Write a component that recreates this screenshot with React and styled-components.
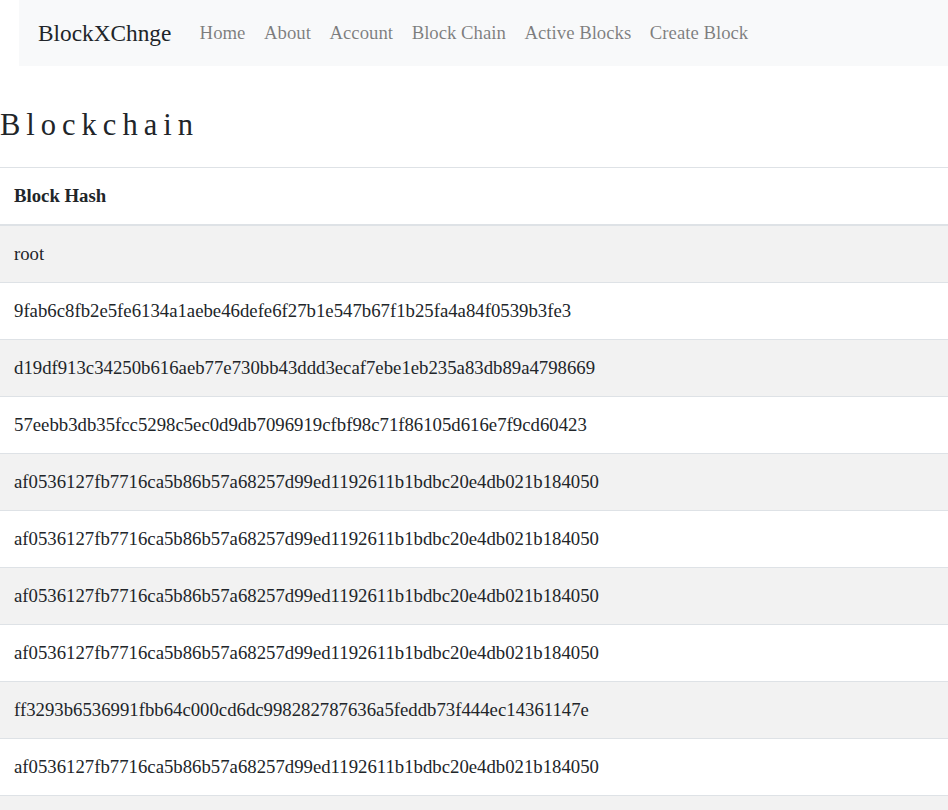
import styled, { createGlobalStyle } from "styled-components";

const GlobalStyle = createGlobalStyle`
  body {
    margin: 0;
    background: #fff;
    font-family: "Liberation Serif", "Times New Roman", serif;
    font-size: 18.75px;
    color: #212529;
  }
`;

const NAV_LINKS = ["Home", "About", "Account", "Block Chain", "Active Blocks", "Create Block"];

const HASHES = [
  "root",
  "9fab6c8fb2e5fe6134a1aebe46defe6f27b1e547b67f1b25fa4a84f0539b3fe3",
  "d19df913c34250b616aeb77e730bb43ddd3ecaf7ebe1eb235a83db89a4798669",
  "57eebb3db35fcc5298c5ec0d9db7096919cfbf98c71f86105d616e7f9cd60423",
  "af0536127fb7716ca5b86b57a68257d99ed1192611b1bdbc20e4db021b184050",
  "af0536127fb7716ca5b86b57a68257d99ed1192611b1bdbc20e4db021b184050",
  "af0536127fb7716ca5b86b57a68257d99ed1192611b1bdbc20e4db021b184050",
  "af0536127fb7716ca5b86b57a68257d99ed1192611b1bdbc20e4db021b184050",
  "ff3293b6536991fbb64c000cd6dc998282787636a5feddb73f444ec14361147e",
  "af0536127fb7716ca5b86b57a68257d99ed1192611b1bdbc20e4db021b184050",
  "af0536127fb7716ca5b86b57a68257d99ed1192611b1bdbc20e4db021b184050",
];

const Navbar = styled.nav`
  margin-left: 19px;
  height: 66px;
  background: #f8f9fa;
  display: flex;
  align-items: center;
  padding: 0 19px;
`;

const Brand = styled.a`
  font-size: 23.3px;
  color: #212529;
  margin-right: 19px;
  text-decoration: none;
`;

const NavList = styled.div`
  display: flex;
  align-items: center;
`;

const NavLink = styled.a`
  padding: 8px 9.3px;
  color: rgba(0, 0, 0, 0.5);
  text-decoration: none;
`;

const Title = styled.h1`
  margin: 44px 0 27px;
  font-weight: 400;
  font-size: 30.5px;
  line-height: 30px;
  letter-spacing: 6px;
  color: #212529;
`;

const Table = styled.table`
  width: 100%;
  border-collapse: collapse;
`;

const HeadCell = styled.th`
  text-align: left;
  font-weight: 700;
  padding: 16px 14px;
  line-height: 24px;
  border-top: 1px solid #dee2e6;
  border-bottom: 2px solid #dee2e6;
`;

const Row = styled.tr`
  background: ${({ $striped }) => ($striped ? "#f2f2f2" : "#fff")};
`;

const Cell = styled.td`
  padding: 16px 14px;
  line-height: 24px;
  border-top: 1px solid #dee2e6;
`;

export default function App() {
  return (
    <>
      <GlobalStyle />
      <Navbar>
        <Brand href="#">BlockXChnge</Brand>
        <NavList>
          {NAV_LINKS.map((label) => (
            <NavLink key={label} href="#">{label}</NavLink>
          ))}
        </NavList>
      </Navbar>
      <Title>Blockchain</Title>
      <Table>
        <thead>
          <tr>
            <HeadCell>Block Hash</HeadCell>
          </tr>
        </thead>
        <tbody>
          {HASHES.map((hash, i) => (
            <Row key={i} $striped={i % 2 === 0}>
              <Cell>{hash}</Cell>
            </Row>
          ))}
        </tbody>
      </Table>
    </>
  );
}
